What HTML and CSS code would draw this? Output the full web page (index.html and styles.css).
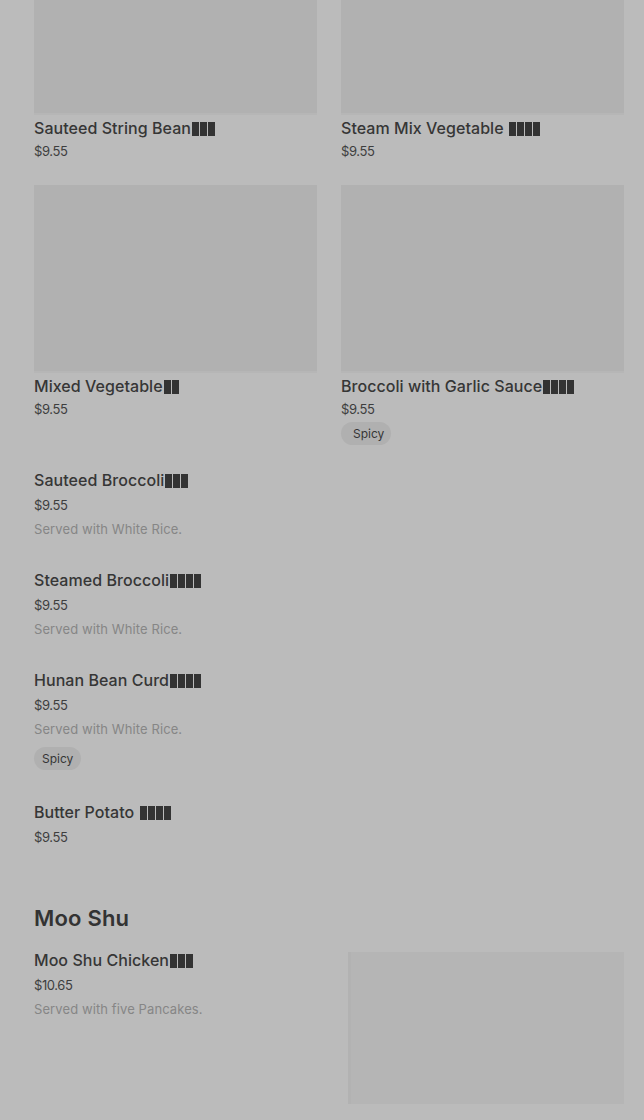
FILE: index.html
```html
<!DOCTYPE html>
<html lang="en">
<head>
<meta charset="utf-8">
<title>Menu</title>
<link rel="stylesheet" href="styles.css">
</head>
<body>
<main class="page">
  <section class="grid">
    <article class="card">
      <div class="thumb"></div>
      <h3 class="title">Sauteed String Bean<span class="tofu"><i></i><i></i><i></i></span></h3>
      <p class="price">$9.55</p>
    </article>
    <article class="card">
      <div class="thumb"></div>
      <h3 class="title">Steam Mix Vegetable <span class="tofu"><i></i><i></i><i></i><i></i></span></h3>
      <p class="price">$9.55</p>
    </article>
    <article class="card">
      <div class="thumb"></div>
      <h3 class="title">Mixed Vegetable<span class="tofu"><i></i><i></i></span></h3>
      <p class="price">$9.55</p>
    </article>
    <article class="card">
      <div class="thumb"></div>
      <h3 class="title">Broccoli with Garlic Sauce<span class="tofu"><i></i><i></i><i></i><i></i></span></h3>
      <p class="price">$9.55</p>
      <span class="chip chip-wide">Spicy</span>
    </article>
  </section>

  <section class="list">
    <article class="item">
      <h3 class="title">Sauteed Broccoli<span class="tofu"><i></i><i></i><i></i></span></h3>
      <p class="price">$9.55</p>
      <p class="desc">Served with White Rice.</p>
    </article>
    <article class="item">
      <h3 class="title">Steamed Broccoli<span class="tofu"><i></i><i></i><i></i><i></i></span></h3>
      <p class="price">$9.55</p>
      <p class="desc">Served with White Rice.</p>
    </article>
    <article class="item">
      <h3 class="title">Hunan Bean Curd<span class="tofu"><i></i><i></i><i></i><i></i></span></h3>
      <p class="price">$9.55</p>
      <p class="desc">Served with White Rice.</p>
      <span class="chip">Spicy</span>
    </article>
    <article class="item">
      <h3 class="title">Butter Potato <span class="tofu"><i></i><i></i><i></i><i></i></span></h3>
      <p class="price">$9.55</p>
    </article>
  </section>

  <section class="category">
    <h2 class="heading">Moo Shu</h2>
    <article class="row-item">
      <div class="row-text">
        <h3 class="title">Moo Shu Chicken<span class="tofu"><i></i><i></i><i></i></span></h3>
        <p class="price">$10.65</p>
        <p class="desc">Served with five Pancakes.</p>
      </div>
      <div class="row-thumb"></div>
    </article>
  </section>
</main>
</body>
</html>
```

FILE: styles.css
```css
* { box-sizing: border-box; }
html, body {
  margin: 0;
  padding: 0;
  background: #bbbbbb;
  height: 1120px;
  overflow: hidden;
}
body {
  font-family: Inter, "Noto Sans", "Liberation Sans", sans-serif;
  color: #363636;
}
.page {
  padding: 0 20px 0 34px;
  margin-top: -73px;
}
.grid {
  display: grid;
  grid-template-columns: 283px 283px;
  column-gap: 24px;
  row-gap: 25px;
}
.card {
  display: flex;
  flex-direction: column;
  align-items: flex-start;
}
.thumb {
  width: 100%;
  height: 188px;
  background: #b1b1b1;
  border-bottom: 2px solid #b6b6b6;
}
.title {
  margin: 3px 0 0;
  font-size: 16px;
  line-height: 20px;
  font-weight: 500;
  color: #363636;
  letter-spacing: 0.05px;
  white-space: nowrap;
}
.tofu {
  display: inline-flex;
  gap: 1px;
  vertical-align: -2px;
  margin-left: 1px;
}
.tofu i {
  display: block;
  width: 7px;
  height: 14px;
  background: #333333;
}
.price {
  margin: 4px 0 0;
  font-size: 13px;
  line-height: 18px;
  color: #3e3e3e;
  letter-spacing: -0.4px;
}
.desc {
  margin: 6px 0 0;
  font-size: 13px;
  line-height: 18px;
  color: #868686;
  letter-spacing: 0.1px;
}
.chip {
  display: inline-flex;
  align-items: center;
  height: 23px;
  padding: 0 8px;
  border-radius: 12px;
  background: #b0b0b0;
  font-size: 12px;
  color: #363636;
  margin-top: 4px;
}
.chip-wide { padding: 0 7px 0 12px; }
.list {
  display: flex;
  flex-direction: column;
  gap: 32px;
  margin-top: 25px;
}
.item {
  display: flex;
  flex-direction: column;
  align-items: flex-start;
}
.item .title { margin-top: 0; }
.item .price { margin-top: 6px; }
.item .chip { margin-top: 9px; }
.category { margin-top: 58px; }
.heading {
  margin: 0;
  font-size: 22px;
  line-height: 28px;
  font-weight: 600;
  color: #333333;
  letter-spacing: 0.2px;
}
.row-item {
  display: flex;
  justify-content: space-between;
  align-items: flex-start;
  margin-top: 18px;
}
.row-text .title { margin-top: 0; }
.row-text .price { margin-top: 6px; }
.row-thumb {
  width: 276px;
  height: 152px;
  margin-top: 2px;
  background: #b5b5b5;
  border-left: 3px solid #b2b2b2;
}
```
